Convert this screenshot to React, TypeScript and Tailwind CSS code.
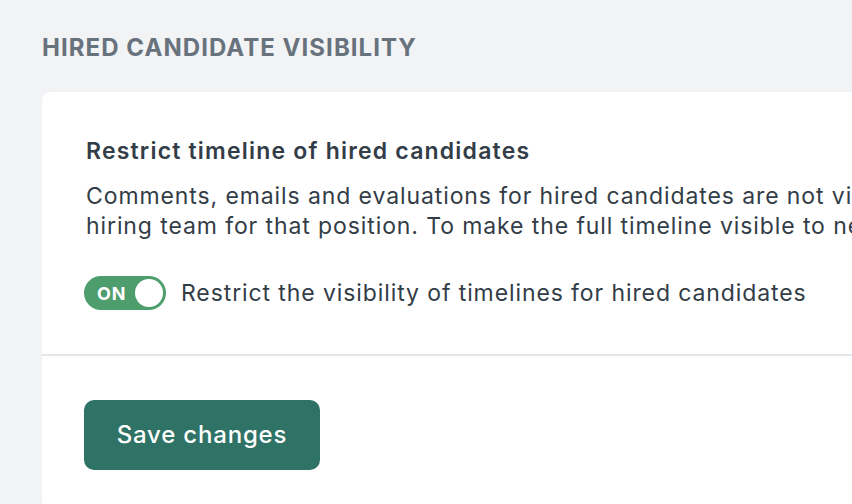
export default function App() {
  return (
    <div
      className="h-[504px] w-[852px] overflow-hidden bg-[#f2f3f5] pl-[42px] pt-[33px]"
      style={{ fontFamily: "Inter, 'Noto Sans', sans-serif" }}
    >
      <h2 className="text-[24px] font-bold uppercase tracking-[1.05px] leading-[30px] text-[#68727d]">
        Hired candidate visibility
      </h2>

      <section className="mt-[29px] w-[1200px] rounded-[8px] bg-white shadow-[0_0_1px_rgba(0,0,0,0.06)]">
        <div className="px-[44px] pt-[44px] pb-[44px]">
          <h3 className="text-[23px] font-semibold leading-[30px] tracking-[1.2px] text-[#333d47]">
            Restrict timeline of hired candidates
          </h3>
          <p className="mt-[15px] whitespace-nowrap text-[23px] leading-[30px] tracking-[0.9px] text-[#333d47]">
            Comments, emails and evaluations for hired candidates are not visible to new members of the
            <br />
            hiring team for that position. To make the full timeline visible to new members, turn off this setting.
          </p>

          <label className="ml-[-2px] mt-[35px] flex items-center gap-[15px]">
            <span className="flex h-[34px] w-[82px] items-center justify-between rounded-full bg-[#4e9d6d] pl-[13px] pr-[3px]">
              <span className="text-[18px] font-bold tracking-[0.8px] text-white">ON</span>
              <span className="h-[28px] w-[28px] rounded-full bg-white" />
            </span>
            <span className="text-[23px] leading-[30px] tracking-[0.9px] text-[#333d47]">
              Restrict the visibility of timelines for hired candidates
            </span>
          </label>
        </div>

        <div className="h-[2px] bg-[#e3e7ea]" />

        <div className="px-[42px] pt-[44px] pb-[40px]">
          <button className="h-[70px] w-[236px] rounded-[10px] bg-[#2f7367] text-[24px] font-medium tracking-[0.8px] text-white">
            Save changes
          </button>
        </div>
      </section>
    </div>
  );
}
